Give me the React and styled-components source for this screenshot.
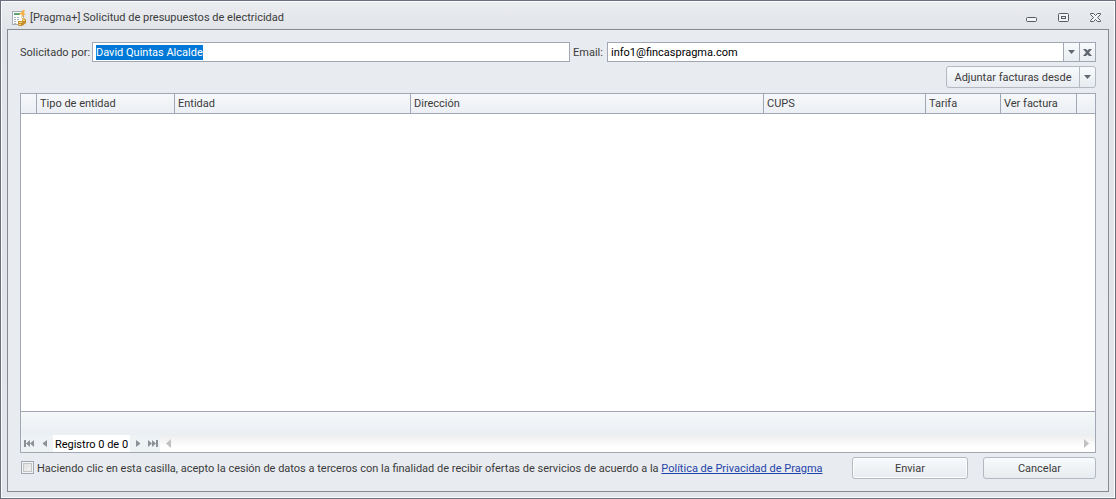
import React, { useEffect, useRef } from "react";
import styled, { createGlobalStyle } from "styled-components";

const columns = [
  { key: "indicator", title: "", width: "16px" },
  { key: "tipo", title: "Tipo de entidad", width: "138px" },
  { key: "entidad", title: "Entidad", width: "236px" },
  { key: "direccion", title: "Dirección", width: "auto" },
  { key: "cups", title: "CUPS", width: "162px" },
  { key: "tarifa", title: "Tarifa", width: "75px" },
  { key: "factura", title: "Ver factura", width: "76px" },
  { key: "extra", title: "", width: "18px" },
];

const AppIcon = () => (
  <svg width='16' height='16' viewBox='0 0 16 16' aria-hidden='true'>
    <rect x='1.5' y='1.5' width='11' height='13' fill='#fbfcfd' stroke='#a3abb4' />
    <rect x='3' y='3' width='6' height='2' fill='#5fa36e' />
    <path d='M3 7h2v1H3zM6 7h2v1H6zM3 9h2v1H3zM6 9h2v1H6zM3 11h2v1H3zM3 13h2v1H3z' fill='#a9b0b8' />
    <path d='M12 0 8 4.5h3L10 8l5-4.5h-2.5L14 0z' fill='#f8b048' />
    <path d='M11 8h3v3h-3z' fill='#e7bd5b' />
    <path d='M7 11h4l4-2v4l-4 3H8l-1-1z' fill='#c68d2d' />
    <path d='M8 12.5h3M12 10.5h2M8 14.5h2' stroke='#f4d681' />
  </svg>
);

const MinimizeIcon = () => (
  <svg width='11' height='11' viewBox='0 0 11 11' aria-hidden='true'>
    <rect x='0.5' y='5.5' width='10' height='4' rx='1' fill='#f4f5f7' stroke='#555b62' />
  </svg>
);

const MaximizeIcon = () => (
  <svg width='11' height='11' viewBox='0 0 11 11' aria-hidden='true'>
    <rect x='0.5' y='1.5' width='10' height='8' rx='1' fill='#f4f5f7' stroke='#555b62' />
    <rect x='3.5' y='4.5' width='4' height='2' fill='#f4f5f7' stroke='#555b62' />
  </svg>
);

const CloseIcon = () => (
  <svg width='11' height='11' viewBox='0 0 11 11' aria-hidden='true'>
    <path
      d='M.5 1.5h3l2 2 2-2h3v1l-3 3 3 3v1h-3l-2-2-2 2h-3v-1l3-3-3-3z'
      fill='#f4f5f7'
      stroke='#555b62'
    />
  </svg>
);

const ArrowDown = () => (
  <svg width='7' height='4' viewBox='0 0 7 4' aria-hidden='true'>
    <path d='M0 0h7L3.5 4z' fill='#5f6770' />
  </svg>
);

const ClearIcon = () => (
  <svg width='9' height='7' viewBox='0 0 9 7' aria-hidden='true'>
    <path d='M0 0h3l1.5 1.5L6 0h3L6 3.5 9 7H6L4.5 5.5 3 7H0l3-3.5z' fill='#5f6770' />
  </svg>
);

const FirstIcon = () => (
  <svg width='10' height='7' viewBox='0 0 10 7' aria-hidden='true'>
    <path d='M0 0h2v7H0zM6 0v7L2 3.5zM10 0v7L6 3.5z' fill='#8b9197' />
  </svg>
);

const LastIcon = () => (
  <svg width='10' height='7' viewBox='0 0 10 7' aria-hidden='true'>
    <path d='M8 0h2v7H8zM4 0v7l4-3.5zM0 0v7l4-3.5z' fill='#8b9197' />
  </svg>
);

const PrevIcon = () => (
  <svg width='4' height='7' viewBox='0 0 4 7' aria-hidden='true'>
    <path d='M4 0v7L0 4V3z' fill='#8b9197' />
  </svg>
);

const NextIcon = () => (
  <svg width='4' height='7' viewBox='0 0 4 7' aria-hidden='true'>
    <path d='M0 0v7l4-3V3z' fill='#8b9197' />
  </svg>
);

const ScrollLeftIcon = () => (
  <svg width='5' height='9' viewBox='0 0 5 9' aria-hidden='true'>
    <path d='M5 0v9L0 4.5z' fill='#bfc1c3' />
  </svg>
);

const ScrollRightIcon = () => (
  <svg width='5' height='9' viewBox='0 0 5 9' aria-hidden='true'>
    <path d='M0 0v9l5-4.5z' fill='#bfc1c3' />
  </svg>
);

const App = () => {
  const nameRef = useRef(null);

  useEffect(() => {
    nameRef.current.focus();
    nameRef.current.select();
  }, []);

  return (
    <>
      <GlobalStyle />
      <Window>
        <TitleBar>
          <AppIcon />
          <Title>[Pragma+] Solicitud de presupuestos de electricidad</Title>
          <WindowButtons>
            <WindowButton aria-label='Minimizar'>
              <MinimizeIcon />
            </WindowButton>
            <WindowButton aria-label='Maximizar'>
              <MaximizeIcon />
            </WindowButton>
            <WindowButton aria-label='Cerrar'>
              <CloseIcon />
            </WindowButton>
          </WindowButtons>
        </TitleBar>

        <Content>
          <Fields>
            <NameField>
              <label htmlFor='solicitante'>Solicitado por:</label>
              <InputBox>
                <Input id='solicitante' ref={nameRef} defaultValue='David Quintas Alcalde' />
              </InputBox>
            </NameField>
            <EmailField>
              <label htmlFor='email'>Email:</label>
              <InputBox>
                <Input id='email' type='text' defaultValue='info1@fincaspragma.com' />
                <InputButton aria-label='Desplegar'>
                  <ArrowDown />
                </InputButton>
                <InputButton aria-label='Borrar'>
                  <ClearIcon />
                </InputButton>
              </InputBox>
            </EmailField>
          </Fields>

          <Toolbar>
            <SplitButton>
              <SplitMain>Adjuntar facturas desde</SplitMain>
              <SplitArrow aria-label='Más opciones'>
                <ArrowDown />
              </SplitArrow>
            </SplitButton>
          </Toolbar>

          <Grid>
            <Table>
              <colgroup>
                {columns.map((column) => (
                  <Col key={column.key} $width={column.width} />
                ))}
              </colgroup>
              <thead>
                <tr>
                  {columns.map((column) => (
                    <HeaderCell key={column.key}>{column.title}</HeaderCell>
                  ))}
                </tr>
              </thead>
            </Table>
            <Rows />
            <Summary />
            <Navigator>
              <NavButton $width='16px' aria-label='Primero'>
                <FirstIcon />
              </NavButton>
              <NavButton $width='16px' aria-label='Anterior'>
                <PrevIcon />
              </NavButton>
              <Record>Registro 0 de 0</Record>
              <NavButton $width='15px' aria-label='Siguiente'>
                <NextIcon />
              </NavButton>
              <NavButton $width='15px' aria-label='Último'>
                <LastIcon />
              </NavButton>
              <ScrollBar>
                <ScrollLeftIcon />
                <ScrollRightIcon />
              </ScrollBar>
            </Navigator>
          </Grid>

          <Footer>
            <Checkbox id='acepto' type='checkbox' />
            <Consent>
              <label htmlFor='acepto'>
                Haciendo clic en esta casilla, acepto la cesión de datos a terceros con la finalidad
                de recibir ofertas de servicios de acuerdo a la{" "}
              </label>
              <a href='#privacidad'>Política de Privacidad de Pragma</a>
            </Consent>
            <Actions>
              <Button $width='116px' $active>
                Enviar
              </Button>
              <Button $width='113px'>Cancelar</Button>
            </Actions>
          </Footer>
        </Content>
      </Window>
    </>
  );
};

const GlobalStyle = createGlobalStyle`
  * {
    box-sizing: border-box;
  }
  body {
    margin: 0;
    color: #3b3b3b;
  }
  body, button, input {
    font-family: Roboto, Tahoma, sans-serif;
    font-size: 11px;
    line-height: 15px;
  }
  button {
    display: flex;
    align-items: center;
    justify-content: center;
    margin: 0;
    padding: 0;
    border: none;
    background: none;
    color: inherit;
  }
  svg {
    display: block;
    flex-shrink: 0;
  }
`;

const Window = styled.div`
  display: flex;
  flex-direction: column;
  min-height: 100vh;
  padding: 0 5px 5px;
  border: 1px solid #6a6f7b;
  box-shadow: inset 0 0 0 1px #fbfcfd;
  background: linear-gradient(#ebedf1, #e0e3e7 30px, #e2e5e9);
`;

const TitleBar = styled.header`
  display: flex;
  align-items: center;
  height: 28px;
  padding: 5px 9px 0 5px;
`;

const Title = styled.h1`
  flex: 1;
  margin: 0 0 0 3px;
  font-size: 11px;
  font-weight: normal;
`;

const WindowButtons = styled.div`
  display: flex;
  gap: 21px;
`;

const WindowButton = styled.button`
  width: 11px;
  height: 11px;
`;

const Content = styled.main`
  display: flex;
  flex: 1;
  flex-direction: column;
  margin: 0 1px 1px;
  padding: 12px;
  border: 1px solid #868b8f;
  background: #e8ebf0;
`;

const Fields = styled.div`
  display: flex;
  gap: 3px;
`;

const Field = styled.div`
  display: flex;
  align-items: center;
  label {
    flex-shrink: 0;
    white-space: nowrap;
  }
`;

const NameField = styled(Field)`
  flex: 550;
  label {
    width: 72px;
  }
`;

const EmailField = styled(Field)`
  flex: 523;
  label {
    width: 34px;
  }
`;

const InputBox = styled.div`
  display: flex;
  flex: 1;
  height: 20px;
  border: 1px solid #a2a8b3;
  background: #fff;
`;

const Input = styled.input`
  flex: 1;
  min-width: 0;
  padding: 1px 3px 0;
  border: none;
  outline: none;
  background: none;
  color: #000;
  caret-color: transparent;
  &::selection {
    background: #0078d7;
    color: #fff;
  }
`;

const InputButton = styled.button`
  width: 16px;
  border-left: 1px solid #a2a8b3;
  background: linear-gradient(#f8fafc, #e9edf1);
`;

const Toolbar = styled.div`
  display: flex;
  justify-content: flex-end;
  margin: 4px 0 5px;
`;

const SplitButton = styled.div`
  display: flex;
  height: 22px;
  border: 1px solid #b4b9c1;
  border-radius: 3px;
  background: linear-gradient(#f8fbfd, #e8ebef);
`;

const SplitMain = styled.button`
  width: 132px;
`;

const SplitArrow = styled.button`
  width: 16px;
  border-left: 1px solid #b4b9c1;
`;

const Grid = styled.section`
  display: flex;
  flex: 1;
  flex-direction: column;
  border: 1px solid #a2a8b3;
  background: #fff;
`;

const Table = styled.table`
  width: 100%;
  table-layout: fixed;
  border-spacing: 0;
`;

const Col = styled.col`
  width: ${(props) => props.$width};
`;

const HeaderCell = styled.th`
  height: 20px;
  padding: 0 3px;
  border-right: 1px solid #a2a8b3;
  border-bottom: 1px solid #a2a8b3;
  background: linear-gradient(#f7f8fa, #ebeff4);
  font-weight: normal;
  text-align: left;
  white-space: nowrap;
  &:last-child {
    border-right: none;
  }
`;

const Rows = styled.div`
  flex: 1;
`;

const Summary = styled.div`
  height: 24px;
  border-top: 1px solid #a2a8b3;
  background: linear-gradient(#f6f8f9, #eaeff3);
`;

const Navigator = styled.div`
  display: flex;
  height: 17px;
`;

const NavButton = styled.button`
  width: ${(props) => props.$width};
  background: #eff2f5;
`;

const Record = styled.span`
  width: 77px;
  padding-top: 2px;
  color: #000;
  text-align: center;
  white-space: nowrap;
`;

const ScrollBar = styled.div`
  display: flex;
  flex: 1;
  align-items: center;
  justify-content: space-between;
  padding: 0 6px;
  background: linear-gradient(#ededed, #fff 12px);
`;

const Footer = styled.footer`
  display: flex;
  align-items: center;
  margin-top: 4px;
`;

const Checkbox = styled.input`
  width: 13px;
  height: 13px;
  margin: 0 3px 2px 1px;
  appearance: none;
  border: 1px solid #a2a8b3;
  background: linear-gradient(135deg, #dcdcdc, #f5f5f5);
  box-shadow: inset 0 0 0 1px #f2f4f6, inset 0 0 0 2px #c5c5c8;
  &:checked {
    background: #5f6770;
  }
`;

const Consent = styled.div`
  flex: 1;
  a {
    color: #1f45a8;
  }
`;

const Actions = styled.div`
  display: flex;
  gap: 15px;
`;

const Button = styled.button`
  width: ${(props) => props.$width};
  height: 22px;
  border: 1px solid #b4b9c1;
  border-radius: 3px;
  background: linear-gradient(#f8fbfd, #e8ebef);
  box-shadow: ${(props) => (props.$active ? "inset 0 0 0 1px #fff" : "none")};
`;

export default App;
